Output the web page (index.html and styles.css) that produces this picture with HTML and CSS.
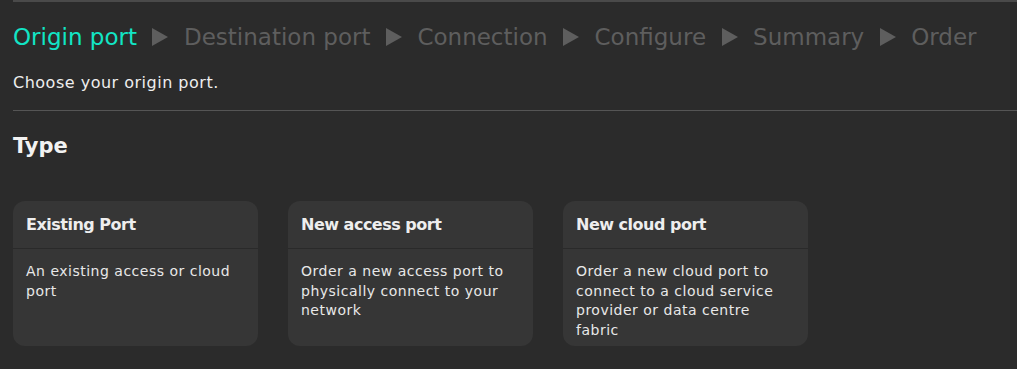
FILE: index.html
```html
<!DOCTYPE html>
<html lang="en">
<head>
    <meta charset="UTF-8">
    <title>Order a port</title>
    <link rel="stylesheet" href="styles.css">
</head>
<body>
    <div class="page">
        <nav class="steps">
            <span class="step active">Origin port</span>
            <span class="arrow"></span>
            <span class="step">Destination port</span>
            <span class="arrow"></span>
            <span class="step">Connection</span>
            <span class="arrow"></span>
            <span class="step">Configure</span>
            <span class="arrow"></span>
            <span class="step">Summary</span>
            <span class="arrow"></span>
            <span class="step">Order</span>
        </nav>

        <p class="intro">Choose your origin port.</p>

        <h2>Type</h2>

        <div class="cards">
            <div class="card">
                <div class="card-title">Existing Port</div>
                <div class="card-body">An existing access or cloud port</div>
            </div>
            <div class="card">
                <div class="card-title">New access port</div>
                <div class="card-body">Order a new access port to physically connect to your network</div>
            </div>
            <div class="card">
                <div class="card-title">New cloud port</div>
                <div class="card-body">Order a new cloud port to connect to a cloud service provider or data centre fabric</div>
            </div>
        </div>
    </div>
</body>
</html>
```

FILE: styles.css
```css
body {
    font-family: "DejaVu Sans", "Open Sans", sans-serif;
    background-color: #2b2b2b;
    color: #eeeeee;
    margin: 0;
    padding: 0;
}

.page {
    margin-left: 13px;
    border-top: 2px solid #4a4a4a;
}

.steps {
    display: flex;
    align-items: center;
    gap: 15.5px;
    height: 66px;
    padding-top: 2px;
}

.step {
    font-size: 23px;
    color: #5e5e5e;
}

.step.active {
    color: #12e5c5;
}

.arrow {
    width: 0;
    height: 0;
    border-top: 9px solid transparent;
    border-bottom: 9px solid transparent;
    border-left: 16px solid #5e5e5e;
}

.intro {
    margin: 0;
    font-size: 16px;
    letter-spacing: 0.5px;
    line-height: 26px;
    padding-bottom: 14px;
    border-bottom: 1px solid #555555;
}

h2 {
    margin: 0;
    padding-top: 20px;
    font-size: 21px;
    line-height: 30px;
    font-weight: bold;
    color: #f2f2f2;
}

.cards {
    display: flex;
    gap: 30px;
    margin-top: 40px;
}

.card {
    width: 245px;
    height: 145px;
    background: #363636;
    border-radius: 12px;
    box-sizing: border-box;
}

.card-title {
    height: 48px;
    padding: 0 13px;
    display: flex;
    align-items: center;
    font-size: 16px;
    font-weight: bold;
    letter-spacing: -0.5px;
    border-bottom: 1px solid #2a2a2a;
    box-sizing: border-box;
}

.card-body {
    padding: 13px 13px;
    font-size: 14px;
    letter-spacing: 0.5px;
    line-height: 19.5px;
    color: #e8e8e8;
}
```
